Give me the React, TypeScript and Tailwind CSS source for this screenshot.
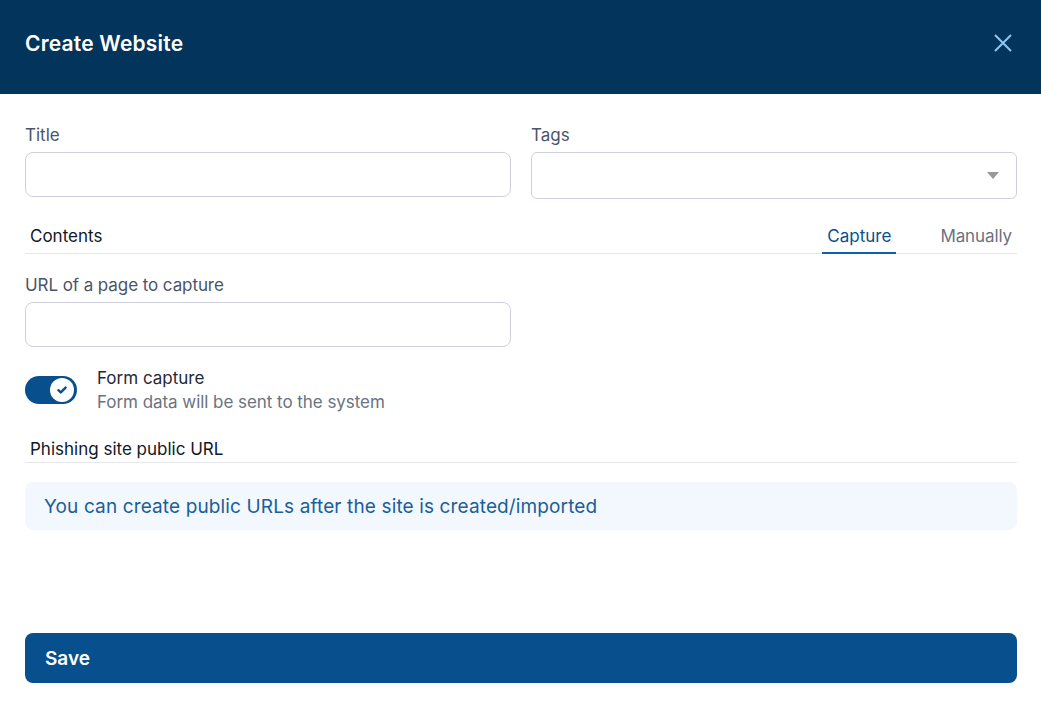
import React from "react";

export default function App() {
  return (
    <div className="w-[1041px] h-[703px] bg-white flex flex-col overflow-hidden font-['Inter',sans-serif]">
      <header className="h-[94px] bg-[#03345c] flex items-center justify-between pl-[25px] pr-[29px] pb-[8px] shrink-0">
        <h1 className="pt-[2px] text-[21px] leading-[28px] font-semibold text-white tracking-[0.2px]">Create Website</h1>
        <svg width="18" height="18" viewBox="0 0 18 18" fill="none" stroke="#8fc6f2" strokeWidth="2">
          <path d="M1 1 L17 17 M17 1 L1 17" />
        </svg>
      </header>
      <main className="flex-1 flex flex-col pl-[25px] pr-[24px]">
        <div className="grid grid-cols-2 gap-[20px] pt-[30px] items-start">
          <div className="flex flex-col">
            <label className="text-[17px] leading-[22px] text-[#4a5568] mb-[6px]">Title</label>
            <div className="h-[45px] rounded-[8px] border border-[#cfd2dc] bg-white" />
          </div>
          <div className="flex flex-col">
            <label className="text-[17px] leading-[22px] text-[#4a5568] mb-[6px]">Tags</label>
            <div className="h-[47px] rounded-[6px] border border-[#cfd2dc] bg-white flex items-center justify-end pr-[17px]">
              <div className="w-0 h-0 border-l-[6px] border-r-[6px] border-t-[7px] border-l-transparent border-r-transparent border-t-[#999999]" />
            </div>
          </div>
        </div>
        <div className="mt-[25px] h-[30px] flex items-stretch justify-between border-b border-[#e5e7eb]">
          <span className="pt-[1px] pl-[5px] text-[17px] leading-[22px] text-[#111827]">Contents</span>
          <div className="flex items-stretch">
            <span className="pt-[1px] px-[5px] -mb-px border-b-2 border-[#0b62a8] text-[17px] leading-[22px] text-[#08508d]">Capture</span>
            <span className="pt-[1px] ml-[39px] pl-[5px] pr-[5px] text-[17px] leading-[22px] tracking-[-0.1px] text-[#6b7280]">Manually</span>
          </div>
        </div>
        <label className="mt-[20px] text-[17px] leading-[22px] tracking-[-0.08px] text-[#4a5568]">URL of a page to capture</label>
        <div className="mt-[6px] w-[486px] h-[45px] rounded-[8px] border border-[#cfd2dc] bg-white" />
        <div className="mt-[19px] flex items-start">
          <div className="mt-[10px] w-[52px] h-[28px] rounded-full bg-[#08508d] flex items-center justify-end pr-[3px]">
            <div className="w-[24px] h-[24px] rounded-full bg-white flex items-center justify-center">
              <svg width="10" height="8" viewBox="0 0 10 8" fill="none" stroke="#08508d" strokeWidth="2.4" strokeLinecap="round" strokeLinejoin="round">
                <path d="M1.4 4.2 L3.8 6.4 L8.6 1.6" />
              </svg>
            </div>
          </div>
          <div className="ml-[20px] flex flex-col">
            <span className="text-[17px] leading-[24px] text-[#1f2937]">Form capture</span>
            <span className="text-[17px] leading-[24px] tracking-[-0.05px] text-[#6b7280]">Form data will be sent to the system</span>
          </div>
        </div>
        <div className="mt-[23px] h-[26px] border-b border-[#e5e7eb] pt-[1px] pl-[5px] text-[17px] leading-[22px] text-[#111827]">Phishing site public URL</div>
        <div className="mt-[19px] h-[48px] rounded-[8px] bg-[#f3f8fe] flex items-center pl-[19px] pt-[2px] text-[19px] tracking-[0.13px] text-[#1a5e9a]">
          You can create public URLs after the site is created/imported
        </div>
        <button className="mt-[103px] h-[50px] rounded-[8px] bg-[#08508d] text-left pl-[20px] pt-[2px] text-[19px] font-semibold text-white">Save</button>
      </main>
    </div>
  );
}
